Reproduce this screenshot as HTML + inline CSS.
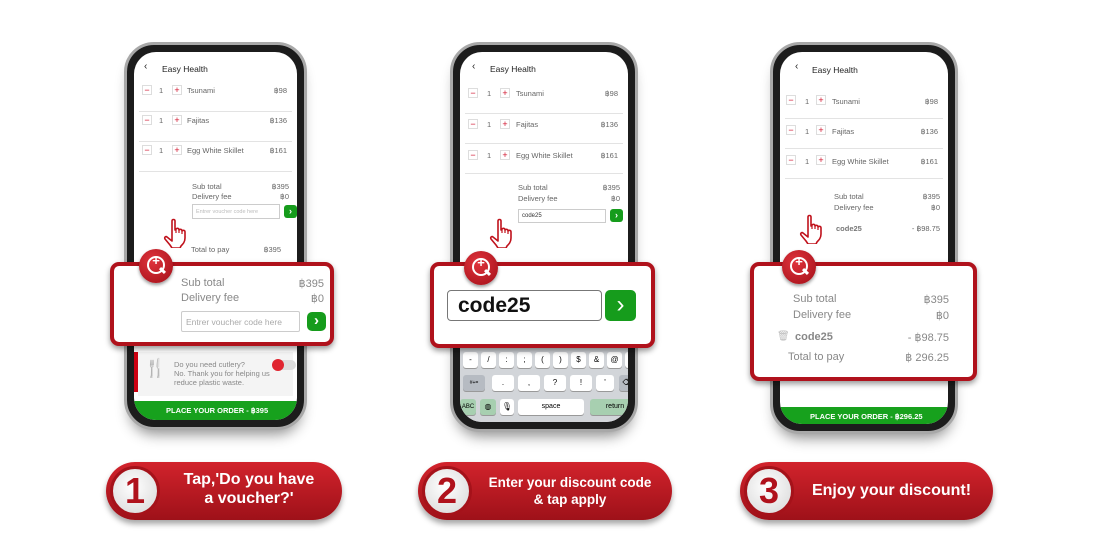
<!DOCTYPE html>
<html><head><meta charset="utf-8"><style>
*{box-sizing:border-box;margin:0;padding:0}
body{width:1100px;height:550px;background:#fff;font-family:"Liberation Sans",sans-serif;position:relative;overflow:hidden}
.a{position:absolute}
.phone{position:absolute;border-radius:30px;background:#1c1c1c;border:3px solid #a8a8a8;box-shadow:0 10px 14px -6px rgba(0,0,0,.45)}
.scr{position:absolute;left:7px;top:7px;right:7px;bottom:7px;border-radius:22px;background:#fff;overflow:hidden}
.t{position:absolute;font-size:7.5px;color:#666;white-space:nowrap}
.b{position:absolute;width:10px;height:10px;border:1px solid #ddd;color:#d0102a;font-size:9px;line-height:8px;text-align:center}
.ln{position:absolute;height:1px;background:#e3e3e3}
.pop{position:absolute;background:#fff;border:4px solid #b0121c;border-radius:9px;box-shadow:0 3px 6px rgba(0,0,0,.4)}
.mag{position:absolute;width:34px;height:34px;border-radius:50%;background:radial-gradient(circle at 40% 35%,#e0333c,#a10f18);box-shadow:0 2px 3px rgba(0,0,0,.4)}
.mag:before{content:"";position:absolute;left:8px;top:7px;width:14px;height:14px;border:2.5px solid #fff;border-radius:50%}
.mag:after{content:"";position:absolute;left:20px;top:20px;width:7px;height:3px;background:#fff;transform:rotate(45deg)}
.mag i{position:absolute;left:10px;top:4px;width:14px;text-align:center;color:#fff;font:bold 13px "Liberation Sans";font-style:normal}
.go{position:absolute;background:#169c1c;border-radius:3px;color:#fff;text-align:center;font-weight:bold}
.pill{position:absolute;height:58px;border-radius:29px;background:linear-gradient(#d2232c,#9e1119);box-shadow:0 4px 6px rgba(0,0,0,.35);color:#fff;font-weight:bold;font-size:16px;text-align:center;line-height:19px}
.num{position:absolute;left:4px;top:4px;width:50px;height:50px;border-radius:50%;background:radial-gradient(circle at 45% 40%,#fff,#d6d6d6);border:3px solid #a5121a;color:#b0121c;font-size:36px;font-weight:bold;line-height:44px;text-align:center}
.order{position:absolute;left:0;right:0;height:22px;background:#17a11d;color:#fff;font-size:7.5px;font-weight:bold;line-height:20px;padding-left:32px}
.key{position:absolute;background:#fff;border-radius:3px;font-size:8px;text-align:center;line-height:16px;height:16px;box-shadow:0 1px 0 #999}
.hand{position:absolute;width:26px;height:30px}
</style></head><body>
<svg width="0" height="0" style="position:absolute"><defs>
<symbol id="h" viewBox="0 0 26 30"><path d="M9 3c0-2 3-2 3 0v9l1-1c1-1 3-1 3 1 1-1 3-1 3 1 1-1 3-1 3 1v6c0 4-2 6-4 8l-1 2H9l-2-3-5-6c-1-2 1-3 2-2l5 4z" fill="#fff" stroke="#c0121c" stroke-width="1.6" stroke-linejoin="round"/><path d="M13 11v4M16 12v3M19 13v3" stroke="#c0121c" stroke-width="1.2"/></symbol>
</defs></svg>

<!-- PHONE 1 -->
<div class="phone" style="left:124px;top:42px;width:183px;height:388px">
<div class="scr">
<div class="t" style="left:10px;top:9px;font-size:10px;color:#222">&lsaquo;</div>
<div class="t" style="left:28px;top:12px;font-size:8.5px;color:#222">Easy Health</div>
<div class="b" style="left:8px;top:33px">−</div><div class="t" style="left:25px;top:34px">1</div><div class="b" style="left:38px;top:33px">+</div><div class="t" style="left:53px;top:34px">Tsunami</div><div class="t" style="right:10px;top:34px">฿98</div>
<div class="ln" style="left:5px;right:5px;top:59px"></div>
<div class="b" style="left:8px;top:63px">−</div><div class="t" style="left:25px;top:64px">1</div><div class="b" style="left:38px;top:63px">+</div><div class="t" style="left:53px;top:64px">Fajitas</div><div class="t" style="right:10px;top:64px">฿136</div>
<div class="ln" style="left:5px;right:5px;top:89px"></div>
<div class="b" style="left:8px;top:93px">−</div><div class="t" style="left:25px;top:94px">1</div><div class="b" style="left:38px;top:93px">+</div><div class="t" style="left:53px;top:94px">Egg White Skillet</div><div class="t" style="right:10px;top:94px">฿161</div>
<div class="ln" style="left:5px;right:5px;top:119px"></div>
<div class="t" style="left:58px;top:130px">Sub total</div><div class="t" style="right:8px;top:130px">฿395</div>
<div class="t" style="left:58px;top:140px">Delivery fee</div><div class="t" style="right:8px;top:140px">฿0</div>
<div class="a" style="left:58px;top:152px;width:88px;height:15px;border:1px solid #ccc;font-size:5.5px;color:#bbb;padding:4px 3px">Entrer voucher code here</div>
<div class="go" style="left:150px;top:153px;width:13px;height:13px;font-size:9px;line-height:12px">›</div>
<div class="t" style="left:57px;top:193px">Total to pay</div><div class="t" style="right:16px;top:193px">฿395</div>
<div class="a" style="left:0;top:300px;width:4px;height:40px;background:#c01"></div>
<div class="a" style="left:4px;top:300px;right:4px;height:44px;background:#f4f4f4"></div>
<div class="t" style="left:10px;top:306px;font-size:18px;color:#999">🍴</div>
<div class="t" style="left:40px;top:308px;font-size:7.5px;color:#888;line-height:9px">Do you need cutlery?<br>No. Thank you for helping us<br>reduce plastic waste.</div>
<div class="a" style="left:140px;top:308px;width:22px;height:10px;border-radius:5px;background:#ddd"></div>
<div class="a" style="left:138px;top:307px;width:12px;height:12px;border-radius:50%;background:#e0242f"></div>
<div class="order" style="top:349px">PLACE YOUR ORDER - ฿395</div>
</div></div>
<svg class="hand" style="left:163px;top:218px"><use href="#h"/></svg>
<div class="pop" style="left:110px;top:262px;width:224px;height:84px">
<div class="t" style="left:67px;top:11px;font-size:11px;color:#888">Sub total</div><div class="t" style="right:6px;top:11px;font-size:11px;color:#888">฿395</div>
<div class="t" style="left:67px;top:26px;font-size:11px;color:#888">Delivery fee</div><div class="t" style="right:6px;top:26px;font-size:11px;color:#888">฿0</div>
<div class="a" style="left:67px;top:45px;width:119px;height:21px;border:1px solid #ccc;border-radius:2px;font-size:8.5px;color:#aaa;padding:5px 4px;white-space:nowrap">Entrer voucher code here</div>
<div class="go" style="left:193px;top:46px;width:19px;height:19px;border-radius:5px;font-size:15px;line-height:18px">›</div>
</div>
<div class="mag" style="left:139px;top:249px"><i>+</i></div>

<!-- PHONE 2 -->
<div class="phone" style="left:450px;top:42px;width:188px;height:390px">
<div class="scr" style="background:#fff">
<div class="t" style="left:12px;top:9px;font-size:10px;color:#222">&lsaquo;</div>
<div class="t" style="left:30px;top:12px;font-size:8.5px;color:#222">Easy Health</div>
<div class="b" style="left:8px;top:36px">−</div><div class="t" style="left:27px;top:37px">1</div><div class="b" style="left:40px;top:36px">+</div><div class="t" style="left:56px;top:37px">Tsunami</div><div class="t" style="right:10px;top:37px">฿98</div>
<div class="ln" style="left:5px;right:5px;top:61px"></div>
<div class="b" style="left:8px;top:67px">−</div><div class="t" style="left:27px;top:68px">1</div><div class="b" style="left:40px;top:67px">+</div><div class="t" style="left:56px;top:68px">Fajitas</div><div class="t" style="right:10px;top:68px">฿136</div>
<div class="ln" style="left:5px;right:5px;top:91px"></div>
<div class="b" style="left:8px;top:98px">−</div><div class="t" style="left:27px;top:99px">1</div><div class="b" style="left:40px;top:98px">+</div><div class="t" style="left:56px;top:99px">Egg White Skillet</div><div class="t" style="right:10px;top:99px">฿161</div>
<div class="ln" style="left:5px;right:5px;top:121px"></div>
<div class="t" style="left:58px;top:131px">Sub total</div><div class="t" style="right:8px;top:131px">฿395</div>
<div class="t" style="left:58px;top:142px">Delivery fee</div><div class="t" style="right:8px;top:142px">฿0</div>
<div class="a" style="left:58px;top:157px;width:88px;height:14px;border:1px solid #ccc;font-size:6px;color:#333;padding:3px 3px">code25</div>
<div class="go" style="left:150px;top:157px;width:13px;height:13px;font-size:9px;line-height:12px">›</div>
<div class="a" style="left:0;top:295px;right:0;height:80px;background:#d2d5d9"></div>
<div class="key" style="left:3px;top:300px;width:15px">-</div><div class="key" style="left:21px;top:300px;width:15px">/</div><div class="key" style="left:39px;top:300px;width:15px">:</div><div class="key" style="left:57px;top:300px;width:15px">;</div><div class="key" style="left:75px;top:300px;width:15px">(</div><div class="key" style="left:93px;top:300px;width:15px">)</div><div class="key" style="left:111px;top:300px;width:15px">$</div><div class="key" style="left:129px;top:300px;width:15px">&amp;</div><div class="key" style="left:147px;top:300px;width:15px">@</div><div class="key" style="left:165px;top:300px;width:12px">"</div>
<div class="key" style="left:3px;top:323px;width:22px;background:#b6bbc2;font-size:5px">#+=</div><div class="key" style="left:32px;top:323px;width:22px">.</div><div class="key" style="left:58px;top:323px;width:22px">,</div><div class="key" style="left:84px;top:323px;width:22px">?</div><div class="key" style="left:110px;top:323px;width:22px">!</div><div class="key" style="left:136px;top:323px;width:18px">'</div><div class="key" style="left:159px;top:323px;width:18px;background:#b6bbc2">⌫</div>
<div class="key" style="left:0;top:347px;width:16px;background:#a7cfb0;font-size:6px">ABC</div><div class="key" style="left:20px;top:347px;width:16px;background:#a7cfb0">◍</div><div class="key" style="left:40px;top:347px;width:14px">🎙</div><div class="key" style="left:58px;top:347px;width:66px;font-size:7px">space</div><div class="key" style="left:130px;top:347px;width:50px;background:#a7cfb0;font-size:7px">return</div>
</div></div>
<svg class="hand" style="left:489px;top:218px"><use href="#h"/></svg>
<div class="pop" style="left:430px;top:262px;width:225px;height:86px">
<div class="a" style="left:13px;top:24px;width:155px;height:31px;border:1px solid #777;border-radius:4px;font-size:21px;font-weight:bold;color:#111;padding:3px 10px">code25</div>
<div class="go" style="left:171px;top:24px;width:31px;height:31px;border-radius:5px;font-size:24px;line-height:29px;font-weight:normal">›</div>
</div>
<div class="mag" style="left:464px;top:251px"><i>+</i></div>

<!-- PHONE 3 -->
<div class="phone" style="left:770px;top:42px;width:188px;height:392px">
<div class="scr">
<div class="t" style="left:15px;top:9px;font-size:10px;color:#222">&lsaquo;</div>
<div class="t" style="left:32px;top:13px;font-size:8.5px;color:#222">Easy Health</div>
<div class="b" style="left:6px;top:43px">−</div><div class="t" style="left:25px;top:45px">1</div><div class="b" style="left:36px;top:43px">+</div><div class="t" style="left:52px;top:45px">Tsunami</div><div class="t" style="right:10px;top:45px">฿98</div>
<div class="ln" style="left:5px;right:5px;top:66px"></div>
<div class="b" style="left:6px;top:73px">−</div><div class="t" style="left:25px;top:75px">1</div><div class="b" style="left:36px;top:73px">+</div><div class="t" style="left:52px;top:75px">Fajitas</div><div class="t" style="right:10px;top:75px">฿136</div>
<div class="ln" style="left:5px;right:5px;top:96px"></div>
<div class="b" style="left:6px;top:103px">−</div><div class="t" style="left:25px;top:105px">1</div><div class="b" style="left:36px;top:103px">+</div><div class="t" style="left:52px;top:105px">Egg White Skillet</div><div class="t" style="right:10px;top:105px">฿161</div>
<div class="ln" style="left:5px;right:5px;top:126px"></div>
<div class="t" style="left:54px;top:140px">Sub total</div><div class="t" style="right:8px;top:140px">฿395</div>
<div class="t" style="left:54px;top:151px">Delivery fee</div><div class="t" style="right:8px;top:151px">฿0</div>
<div class="t" style="left:56px;top:172px;font-weight:bold;color:#777">code25</div><div class="t" style="right:8px;top:172px">- ฿98.75</div>
<div class="order" style="top:355px;padding-left:30px">PLACE YOUR ORDER - ฿296.25</div>
</div></div>
<svg class="hand" style="left:799px;top:214px"><use href="#h"/></svg>
<div class="pop" style="left:750px;top:262px;width:227px;height:119px">
<div class="t" style="left:39px;top:27px;font-size:11px;color:#888">Sub total</div><div class="t" style="right:24px;top:27px;font-size:11px;color:#888">฿395</div>
<div class="t" style="left:39px;top:43px;font-size:11px;color:#888">Delivery fee</div><div class="t" style="right:24px;top:43px;font-size:11px;color:#888">฿0</div>
<div class="t" style="left:23px;top:65px;font-size:10px;color:#bbb">🗑</div>
<div class="t" style="left:41px;top:65px;font-size:11px;color:#888;font-weight:bold">code25</div><div class="t" style="right:24px;top:65px;font-size:11px;color:#888">- ฿98.75</div>
<div class="t" style="left:34px;top:85px;font-size:11px;color:#888">Total to pay</div><div class="t" style="right:24px;top:85px;font-size:11px;color:#888">฿ 296.25</div>
</div>
<div class="mag" style="left:782px;top:250px"><i>+</i></div>

<!-- PILLS -->
<div class="pill" style="left:106px;top:462px;width:236px;padding:8px 0 0 50px">Tap,'Do you have<br>a voucher?'<div class="num">1</div></div>
<div class="pill" style="left:418px;top:462px;width:254px;padding:12px 0 0 50px;font-size:13.5px;line-height:17px">Enter your discount code<br>&amp; tap apply<div class="num">2</div></div>
<div class="pill" style="left:740px;top:462px;width:253px;padding:0 0 0 50px;line-height:58px">Enjoy your discount!<div class="num">3</div></div>
</body></html>
